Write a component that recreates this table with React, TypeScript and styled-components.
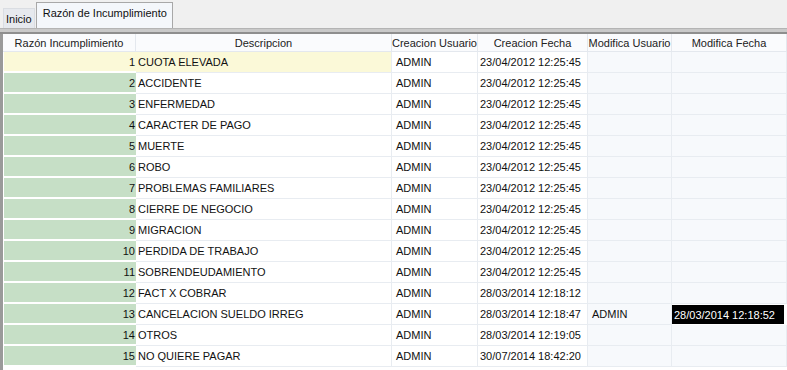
import React from "react";
import styled, { createGlobalStyle } from "styled-components";

const Global = createGlobalStyle`
  html, body { margin: 0; padding: 0; background: #f0f0f0; }
  body { font-family: "Liberation Sans", Arial, sans-serif; font-size: 11px; color: #111; }
`;

const Page = styled.div`
  width: 787px;
  height: 370px;
  overflow: hidden;
  display: flex;
  flex-direction: column;
  background: #f0f0f0;
`;

const TabBar = styled.div`
  height: 28px;
  flex: none;
  display: flex;
  align-items: flex-end;
  padding-left: 3px;
  gap: 1px;
  background: #f0f0f0;
`;

const Tab = styled.div<{ $active?: boolean }>`
  box-sizing: border-box;
  height: ${(p) => (p.$active ? 26 : 20)}px;
  padding: ${(p) => (p.$active ? "4px 5px 0 6px" : "0 2px")};
  display: flex;
  align-items: ${(p) => (p.$active ? "flex-start" : "center")};
  background: ${(p) => (p.$active ? "#f4f7fb" : "#e6e9ee")};
  border: 1px solid ${(p) => (p.$active ? "#a8a8a8" : "#dadde2")};
  border-bottom: none;
  color: #111;
  white-space: nowrap;
`;

const Divider = styled.div`
  box-sizing: border-box;
  flex: none;
  height: 6px;
  border-top: 1px solid #b4b4b4;
  border-bottom: 2px solid #8e8e8e;
  background: #c9c9c9;
`;

const TableWrap = styled.div`
  flex: 1;
  box-sizing: border-box;
  border-left: 3px solid #9a9a9a;
  background: #fff;
`;

const Grid = styled.div`
  display: grid;
  grid-template-columns: 133px 256px 86px 110px 84px 1fr;
  grid-template-rows: 18px;
  grid-auto-rows: 21px;
`;

const HeadCell = styled.div`
  box-sizing: border-box;
  display: flex;
  align-items: center;
  justify-content: center;
  padding-top: 1px;
  border-right: 1px solid #e4e8ee;
  border-bottom: 1px solid #e4e8ee;
  background: #fafbfd;
  color: #222;
  white-space: nowrap;
  overflow: hidden;
`;

const Cell = styled.div<{ $bg?: string; $align?: "left" | "right"; $pad?: number }>`
  box-sizing: border-box;
  display: flex;
  align-items: center;
  justify-content: ${(p) => (p.$align === "right" ? "flex-end" : "flex-start")};
  padding: ${(p) => (p.$align === "right" ? `0 ${p.$pad ?? 1}px 0 0` : `0 0 0 ${p.$pad ?? 2}px`)};
  background: ${(p) => p.$bg ?? "#fff"};
  border-right: 1px solid #e8ecf1;
  border-bottom: 1px solid #e8ecf1;
  white-space: nowrap;
  overflow: hidden;
`;

const KeyCell = styled(Cell)`
  border-left: 1px solid #fff;
  border-right: none;
  border-bottom: 2px solid #fff;
  padding-right: 1px;
`;

const Selected = styled(Cell)`
  background: #000;
  color: #fff;
  border: none;
  padding-left: 2px;
  margin: 1px 3px 1px 0;
`;

type Row = { id: number; desc: string; date: string; modUser?: string; modDate?: string };

const rows: Row[] = [
  { id: 1, desc: "CUOTA ELEVADA", date: "23/04/2012 12:25:45" },
  { id: 2, desc: "ACCIDENTE", date: "23/04/2012 12:25:45" },
  { id: 3, desc: "ENFERMEDAD", date: "23/04/2012 12:25:45" },
  { id: 4, desc: "CARACTER DE PAGO", date: "23/04/2012 12:25:45" },
  { id: 5, desc: "MUERTE", date: "23/04/2012 12:25:45" },
  { id: 6, desc: "ROBO", date: "23/04/2012 12:25:45" },
  { id: 7, desc: "PROBLEMAS FAMILIARES", date: "23/04/2012 12:25:45" },
  { id: 8, desc: "CIERRE DE NEGOCIO", date: "23/04/2012 12:25:45" },
  { id: 9, desc: "MIGRACION", date: "23/04/2012 12:25:45" },
  { id: 10, desc: "PERDIDA DE TRABAJO", date: "23/04/2012 12:25:45" },
  { id: 11, desc: "SOBRENDEUDAMIENTO", date: "23/04/2012 12:25:45" },
  { id: 12, desc: "FACT X COBRAR", date: "28/03/2014 12:18:12" },
  { id: 13, desc: "CANCELACION SUELDO IRREG", date: "28/03/2014 12:18:47", modUser: "ADMIN", modDate: "28/03/2014 12:18:52" },
  { id: 14, desc: "OTROS", date: "28/03/2014 12:19:05" },
  { id: 15, desc: "NO QUIERE PAGAR", date: "30/07/2014 18:42:20" },
];

const headers = ["Razón Incumplimiento", "Descripcion", "Creacion Usuario", "Creacion Fecha", "Modifica Usuario", "Modifica Fecha"];

export default function App() {
  return (
    <>
      <Global />
      <Page>
        <TabBar>
          <Tab>Inicio</Tab>
          <Tab $active>Razón de Incumplimiento</Tab>
        </TabBar>
        <Divider />
        <TableWrap>
          <Grid>
            {headers.map((h) => (
              <HeadCell key={h}>{h}</HeadCell>
            ))}
            {rows.map((r) => {
              const first = r.id === 1;
              const yellow = "#fbf9d8";
              return (
                <React.Fragment key={r.id}>
                  <KeyCell $align="right" $bg={first ? yellow : "#c6dfc6"}>{r.id}</KeyCell>
                  <Cell $bg={first ? yellow : "#fff"} $pad={2}>{r.desc}</Cell>
                  <Cell $pad={4}>ADMIN</Cell>
                  <Cell $pad={2}>{r.date}</Cell>
                  <Cell $bg="#f7f9fc" $pad={4}>{r.modUser ?? ""}</Cell>
                  {r.modDate ? <Selected>{r.modDate}</Selected> : <Cell $bg="#f7f9fc" />}
                </React.Fragment>
              );
            })}
          </Grid>
        </TableWrap>
      </Page>
    </>
  );
}
